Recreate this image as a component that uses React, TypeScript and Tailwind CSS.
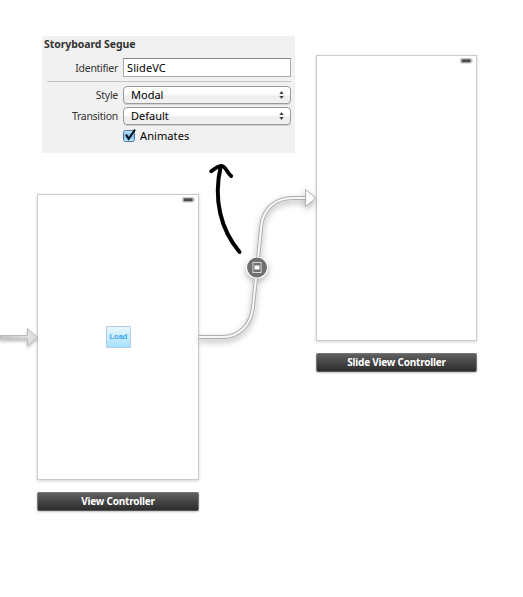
import React from "react";

function Battery() {
  return (
    <svg width="13" height="6" viewBox="0 0 13 6" className="block">
      <rect x="0.5" y="0.5" width="11" height="4.6" rx="1" fill="#bdbdbd" stroke="#c9c9c9" strokeWidth="1" />
      <rect x="1.8" y="1.4" width="8.6" height="2.8" fill="#484848" />
      <rect x="11.6" y="1.8" width="1" height="2" fill="#aaa" />
    </svg>
  );
}

function Scene({ title, className, children }: { title: string; className: string; children?: React.ReactNode }) {
  return (
    <section className={"absolute flex flex-col gap-3 " + className}>
      <div className="flex h-[286px] flex-col border border-[#cbcbcb] bg-white shadow-[0_1px_3px_rgba(0,0,0,0.18)]">
        <div className="flex justify-end pt-[2px] pr-[3px]">
          <Battery />
        </div>
        {children}
      </div>
      <div className="flex h-[19px] items-center justify-center rounded-[2px] border border-[#777] border-b-[#555] bg-linear-to-b from-[#606060] to-[#2d2d2d] text-[10px] font-bold tracking-[-0.23px] whitespace-nowrap text-white shadow-[0_1px_2px_rgba(0,0,0,0.25)]">
        {title}
      </div>
    </section>
  );
}

function Popup({ value }: { value: string }) {
  return (
    <div className="flex h-[18px] w-[168px] items-center justify-between rounded-[4px] border border-[#999] bg-linear-to-b from-white from-40% via-[#ededed] via-60% to-[#f3f3f3] pr-[6px] pl-[7px] shadow-[0_1px_0_#d0d0d0]">
      <span>{value}</span>
      <svg width="5" height="8" viewBox="0 0 5 8" fill="#444">
        <path d="M2.5 0 4.7 3H.3ZM2.5 8 4.7 5H.3Z" />
      </svg>
    </div>
  );
}

function Inspector() {
  return (
    <div className="absolute top-9 left-[42px] h-[117px] w-[253px] bg-[#f1f1f1] pr-1 text-[11px] leading-[18px] text-black">
      <h2 className="h-[22px] pl-[2px] text-[10.5px] leading-[17px] font-bold tracking-[-0.08px] text-[#333]">Storyboard Segue</h2>
      <div className="flex h-[19px] items-center justify-end gap-[5px]">
        <span className="text-[10.5px] tracking-[-0.28px] text-[#333]">Identifier</span>
        <div className="flex h-[19px] w-[168px] items-center border border-[#aaa] border-t-[#888] bg-white pl-[3px] tracking-[0.1px]">SlideVC</div>
      </div>
      <div className="mt-1 ml-[5px] h-px w-[244px] bg-[#c4c4c4]" />
      <div className="mt-1 flex items-center justify-end gap-[5px]">
        <span className="text-[10.5px] tracking-[-0.28px] text-[#333]">Style</span>
        <Popup value="Modal" />
      </div>
      <div className="mt-[3px] flex items-center justify-end gap-[5px]">
        <span className="text-[10.5px] tracking-[-0.28px] text-[#333]">Transition</span>
        <Popup value="Default" />
      </div>
      <div className="mt-[2px] ml-[81px] flex items-center gap-1">
        <svg width="13" height="15" viewBox="0 1 13 15">
          <defs>
            <linearGradient id="check" x1="0" y1="0" x2="0" y2="1">
              <stop offset="0" stopColor="#d5eafa" />
              <stop offset="0.5" stopColor="#78b7e8" />
              <stop offset="1" stopColor="#bdf0ff" />
            </linearGradient>
          </defs>
          <rect x="0.5" y="2.5" width="11" height="11" rx="2" fill="url(#check)" stroke="#53779c" />
          <path d="M3 6.5 5.6 10.8 12 1.6" fill="none" stroke="#0b1524" strokeWidth="2" />
        </svg>
        <span className="tracking-[0.1px]">Animates</span>
      </div>
    </div>
  );
}

const segue = "M199 337H223C239 337 251 325 253 307L261.5 224C264 209 275 198 293 198H306";

function Connections() {
  return (
    <svg className="absolute inset-0" width="523" height="597" viewBox="0 0 523 597" fill="none">
      <defs>
        <filter id="soft" x="-20%" y="-20%" width="140%" height="150%">
          <feDropShadow dx="0" dy="3" stdDeviation="3" floodColor="#000" floodOpacity="0.3" />
        </filter>
        <filter id="entrySoft" filterUnits="userSpaceOnUse" x="-5" y="320" width="55" height="40">
          <feDropShadow dx="0" dy="2" stdDeviation="1.5" floodColor="#000" floodOpacity="0.25" />
        </filter>
        <linearGradient id="entry" gradientUnits="userSpaceOnUse" x1="0" y1="0" x2="28" y2="0">
          <stop stopColor="#c4c4c4" />
          <stop offset="1" stopColor="#dedede" />
        </linearGradient>
      </defs>
      <g filter="url(#entrySoft)">
        <path d="M0 335.5H27.5V328.5L37.5 337.3 27.5 345.8V339H0Z" fill="url(#entry)" stroke="#b5b5b5" strokeWidth="0.9" />
      </g>
      <g filter="url(#soft)">
        <path d={segue} stroke="#adadad" strokeWidth="4" />
        <path d={segue} stroke="#f8f8f8" strokeWidth="2" />
        <path d="M305.6 189.5 315.6 198 305.6 206.5Z" fill="#fff" stroke="#aaa" />
        <circle cx="257" cy="267.5" r="10.8" fill="#fff" />
      </g>
      <circle cx="257" cy="267.5" r="10" fill="#707070" />
      <rect x="252.9" y="262.5" width="8.2" height="10" stroke="#d5d5d5" />
      <rect x="254.5" y="265.5" width="5" height="4" fill="#fff" />
      <g stroke="#000" strokeWidth="4" strokeLinecap="round" strokeLinejoin="round">
        <path d="M239.5 252C221 230 213 200 220.7 166.5" />
        <path d="M211.2 171.3C214 169 217 166.2 221.5 165.8C226 166 227 173.5 231.2 176" strokeWidth="3.8" />
      </g>
    </svg>
  );
}

export default function App() {
  return (
    <main className="relative h-[597px] w-[523px] overflow-hidden bg-white font-['Noto_Sans','Open_Sans',sans-serif]">
      <Scene title="View Controller" className="top-[194px] left-[37px] w-[162px]">
        <div className="mt-[123px] ml-[68px] flex h-[22px] w-[25px] items-center justify-center rounded-[1px] border border-[#b5cbe2] bg-linear-to-b from-[#e8f7ff] to-[#a6e2ff] font-['Liberation_Sans',sans-serif] text-[7.5px] font-bold text-[#42a7ec]">
          Load
        </div>
      </Scene>
      <Scene title="Slide View Controller" className="top-[55px] left-[316px] w-[161px]" />
      <Connections />
      <Inspector />
    </main>
  );
}
